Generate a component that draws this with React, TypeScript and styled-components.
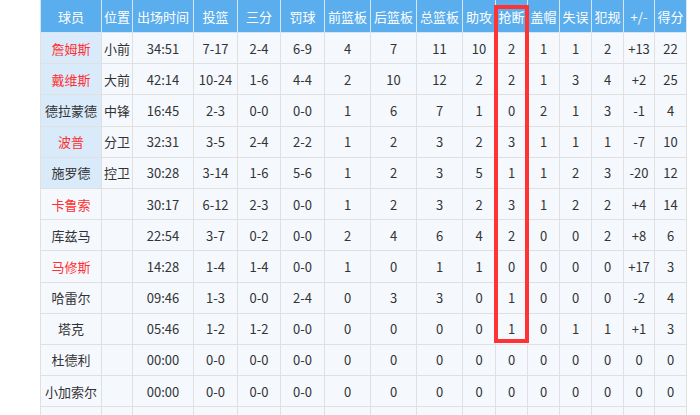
import styled, { createGlobalStyle } from "styled-components";

const GlobalStyle = createGlobalStyle`
    html, body {
        margin: 0;
        padding: 0;
        background: #fff;
        overflow: hidden;
    }
    body {
        font-family: "Noto Sans CJK SC", "Noto Sans", sans-serif;
    }
`;

const Wrapper = styled.div`
    position: relative;
    width: 646px;
    margin-left: 40px;
`;

const Table = styled.table`
    width: 646px;
    border-collapse: collapse;
    table-layout: fixed;
    font-size: 13px;
    color: #333;
    background: #f5f9fe;
`;

const HeadCell = styled.th`
    height: 32px;
    padding: 0;
    background: #5aaeee;
    color: #fff;
    font-weight: normal;
    font-size: 13px;
    text-align: center;
    border: 1px solid #d6e6f4;
    border-top: none;
    white-space: nowrap;
    overflow: hidden;
`;

const Row = styled.tr`
    height: 31.2px;
`;

const Cell = styled.td<{ $starter?: boolean; $red?: boolean }>`
    padding: 0;
    text-align: center;
    border: 1px solid #e0e0e0;
    white-space: nowrap;
    overflow: hidden;
    background: ${(p) => (p.$starter ? "#d9eafb" : "transparent")};
    color: ${(p) => (p.$red ? "#ff2f2f" : "#333")};
`;

const Highlight = styled.div`
    position: absolute;
    left: 454px;
    top: 5px;
    width: 35px;
    height: 338px;
    box-sizing: border-box;
    border: 4px solid #ff3333;
    pointer-events: none;
`;

const widths = [61, 31, 61, 44, 43, 44, 46, 46, 46, 33, 32, 32, 32, 32, 31, 32];
const headers = ["球员", "位置", "出场时间", "投篮", "三分", "罚球", "前篮板", "后篮板", "总篮板", "助攻", "抢断", "盖帽", "失误", "犯规", "+/-", "得分"];

type Player = { name: string; red: boolean; starter: boolean; pos: string; stats: string[] };

const players: Player[] = [
    { name: "詹姆斯", red: true, starter: true, pos: "小前", stats: ["34:51", "7-17", "2-4", "6-9", "4", "7", "11", "10", "2", "1", "1", "2", "+13", "22"] },
    { name: "戴维斯", red: true, starter: true, pos: "大前", stats: ["42:14", "10-24", "1-6", "4-4", "2", "10", "12", "2", "2", "1", "3", "4", "+2", "25"] },
    { name: "德拉蒙德", red: false, starter: true, pos: "中锋", stats: ["16:45", "2-3", "0-0", "0-0", "1", "6", "7", "1", "0", "2", "1", "3", "-1", "4"] },
    { name: "波普", red: true, starter: true, pos: "分卫", stats: ["32:31", "3-5", "2-4", "2-2", "1", "2", "3", "2", "3", "1", "1", "1", "-7", "10"] },
    { name: "施罗德", red: false, starter: true, pos: "控卫", stats: ["30:28", "3-14", "1-6", "5-6", "1", "2", "3", "5", "1", "1", "2", "3", "-20", "12"] },
    { name: "卡鲁索", red: true, starter: false, pos: "", stats: ["30:17", "6-12", "2-3", "0-0", "1", "2", "3", "2", "3", "1", "2", "2", "+4", "14"] },
    { name: "库兹马", red: false, starter: false, pos: "", stats: ["22:54", "3-7", "0-2", "0-0", "2", "4", "6", "4", "2", "0", "0", "2", "+8", "6"] },
    { name: "马修斯", red: true, starter: false, pos: "", stats: ["14:28", "1-4", "1-4", "0-0", "1", "0", "1", "1", "0", "0", "0", "0", "+17", "3"] },
    { name: "哈雷尔", red: false, starter: false, pos: "", stats: ["09:46", "1-3", "0-0", "2-4", "0", "3", "3", "0", "1", "0", "0", "0", "-2", "4"] },
    { name: "塔克", red: false, starter: false, pos: "", stats: ["05:46", "1-2", "1-2", "0-0", "0", "0", "0", "0", "1", "0", "1", "1", "+1", "3"] },
    { name: "杜德利", red: false, starter: false, pos: "", stats: ["00:00", "0-0", "0-0", "0-0", "0", "0", "0", "0", "0", "0", "0", "0", "0", "0"] },
    { name: "小加索尔", red: false, starter: false, pos: "", stats: ["00:00", "0-0", "0-0", "0-0", "0", "0", "0", "0", "0", "0", "0", "0", "0", "0"] },
    { name: "", red: false, starter: false, pos: "", stats: ["", "", "", "", "", "", "", "", "", "", "", "", "", ""] },
];

export default function App() {
    return (
        <>
            <GlobalStyle />
            <Wrapper>
                <Table>
                    <colgroup>
                        {widths.map((w, i) => (
                            <col key={i} style={{ width: w }} />
                        ))}
                    </colgroup>
                    <thead>
                        <tr>
                            {headers.map((h) => (
                                <HeadCell key={h}>{h}</HeadCell>
                            ))}
                        </tr>
                    </thead>
                    <tbody>
                        {players.map((p, i) => (
                            <Row key={i}>
                                <Cell $starter={p.starter} $red={p.red}>
                                    {p.name}
                                </Cell>
                                <Cell>{p.pos}</Cell>
                                {p.stats.map((s, j) => (
                                    <Cell key={j}>{s}</Cell>
                                ))}
                            </Row>
                        ))}
                    </tbody>
                </Table>
                <Highlight />
            </Wrapper>
        </>
    );
}
